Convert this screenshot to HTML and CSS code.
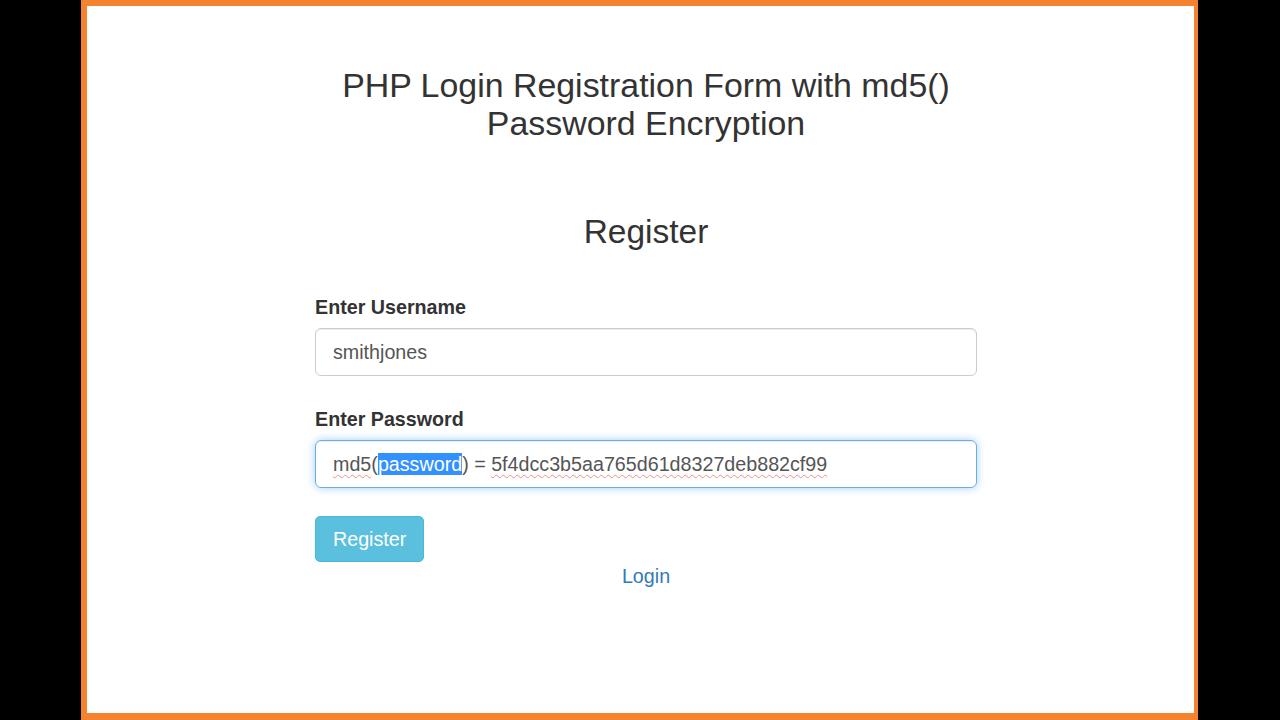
FILE: index.html
```html
<!DOCTYPE html>
<html>
<head>
<meta charset="utf-8">
<link rel="stylesheet" href="styles.css">
</head>
<body>
<div class="frame">
  <div class="container">
    <h3 class="title">PHP Login Registration Form with md5()<br>Password Encryption</h3>
    <h2 class="heading">Register</h2>
    <form class="form">
      <div class="group group-first">
        <label class="label">Enter Username</label>
        <div class="input">smithjones</div>
      </div>
      <div class="group">
        <label class="label">Enter Password</label>
        <div class="input focus"><span class="spell">md5</span>(<span class="sel">password</span>) = <span class="spell">5f4dcc3b5aa765d61d8327deb882cf99</span></div>
      </div>
      <div class="actions">
        <span class="btn">Register</span>
      </div>
      <div class="link-row"><a class="link" href="#">Login</a></div>
    </form>
  </div>
</div>
</body>
</html>
```
FILE: styles.css
```css
html, body {
  margin: 0;
  padding: 0;
  background: #000;
  height: 720px;
  overflow: hidden;
}
body {
  font-family: "Liberation Sans", Arial, sans-serif;
  color: #333;
}
.frame {
  box-sizing: border-box;
  margin-left: 81px;
  width: 1117px;
  height: 720px;
  background: #fff;
  border-style: solid;
  border-color: #f5822f;
  border-width: 6px 4px 7px 6px;
  padding-left: 11px;
}
.container {
  width: 662px;
  margin: 0 auto;
}
.title {
  margin: 0;
  padding-top: 60px;
  font-size: 33.9px;
  font-weight: normal;
  line-height: 38px;
  text-align: center;
  color: #333;
}
.heading {
  margin: 70px 0 0;
  font-size: 33.5px;
  font-weight: normal;
  line-height: 40px;
  text-align: center;
  color: #333;
}
.form {
  margin-top: 42px;
}
.group {
  margin-bottom: 19px;
}
.group-first {
  margin-bottom: 30px;
}
.label {
  display: block;
  font-weight: bold;
  font-size: 19.7px;
  line-height: 27px;
  margin-bottom: 7px;
}
.input {
  box-sizing: border-box;
  height: 48px;
  border: 1px solid #ccc;
  border-radius: 6px;
  padding: 0 17px;
  font-size: 19.7px;
  line-height: 46px;
  color: #555;
  box-shadow: inset 0 1px 1px rgba(0,0,0,.075);
  white-space: nowrap;
}
.input.focus {
  border-color: #66afe9;
  box-shadow: inset 0 1px 1px rgba(0,0,0,.075), 0 0 8px rgba(102,175,233,.6);
}
.spell {
  text-decoration: underline wavy #e89090;
  text-decoration-thickness: 1px;
  text-underline-offset: 3px;
}
.sel {
  background: #3391ff;
  color: #fff;
}
.actions {
  padding-top: 9px;
}
.btn {
  display: inline-block;
  box-sizing: border-box;
  height: 46px;
  padding: 0 17px;
  background: #5bc0de;
  border: 1px solid #46b8da;
  border-radius: 5px;
  color: #fff;
  font-size: 19.7px;
  line-height: 44px;
}
.link-row {
  text-align: center;
  line-height: 27px;
  margin-top: 1px;
}
.link {
  color: #337ab7;
  font-size: 19.7px;
  text-decoration: none;
}
```
